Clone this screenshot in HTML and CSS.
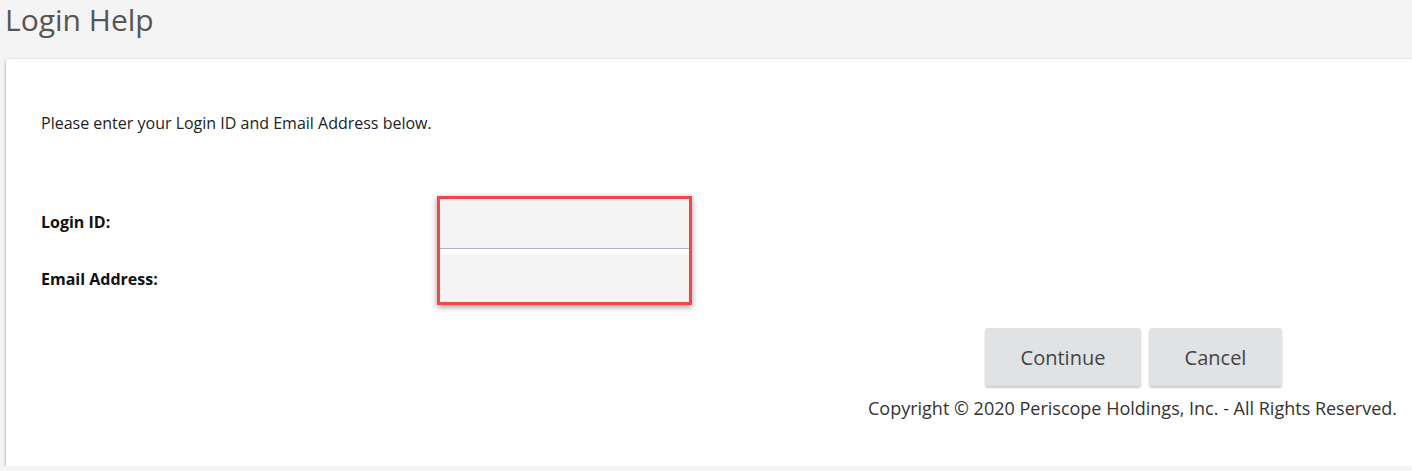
FILE: index.html
```html
<!DOCTYPE html>
<html lang="en">
<head>
<meta charset="utf-8">
<title>Login Help</title>
<link rel="stylesheet" href="styles.css">
</head>
<body>
<header class="page-header">
  <h1 class="page-title">Login Help</h1>
</header>
<main class="card">
  <p class="intro">Please enter your Login ID and Email Address below.</p>
  <form class="login-form">
    <div class="labels">
      <label class="field-label field-label--first" for="loginId">Login ID:</label>
      <label class="field-label field-label--second" for="email">Email Address:</label>
    </div>
    <div class="inputs-box">
      <input class="text-input text-input--first" id="loginId" type="text">
      <input class="text-input text-input--second" id="email" type="text">
    </div>
  </form>
  <div class="actions">
    <button class="btn btn--continue" type="button">Continue</button>
    <button class="btn btn--cancel" type="button">Cancel</button>
  </div>
  <p class="copyright">Copyright © 2020 Periscope Holdings, Inc. - All Rights Reserved.</p>
</main>
</body>
</html>
```

FILE: styles.css
```css
* { box-sizing: border-box; }

html, body {
  margin: 0;
  padding: 0;
  background: #f4f4f4;
  font-family: "Open Sans", "Liberation Sans", sans-serif;
}

.page-header {
  height: 59px;
  padding-left: 5px;
}

.page-title {
  margin: 0;
  font-size: 30px;
  font-weight: 400;
  line-height: 40px;
  color: #555555;
}

.card {
  margin-left: 6px;
  height: 407px;
  background: #ffffff;
  box-shadow: 0 1px 3px rgba(0, 0, 0, 0.35);
  padding: 54px 15px 0 35px;
}

.intro {
  margin: 0;
  font-size: 16px;
  line-height: 20px;
  color: #222222;
}

.login-form {
  display: flex;
  margin-top: 63px;
}

.labels {
  width: 396px;
  display: flex;
  flex-direction: column;
  padding-top: 2px;
  gap: 5px;
}

.field-label {
  display: flex;
  align-items: center;
  font-size: 16px;
  font-weight: 700;
  color: #111111;
}

.field-label--first { height: 48px; }
.field-label--second { height: 48px; margin-top: 4px; }

.inputs-box {
  width: 255px;
  border: 3px solid #f5444a;
  background: #ffffff;
  box-shadow: 0 2px 6px rgba(0, 0, 0, 0.4);
}

.text-input {
  display: block;
  width: 100%;
  border: none;
  background: #f4f4f4;
  font-family: inherit;
  font-size: 14px;
  padding: 0 10px;
  outline: none;
}

.text-input--first {
  height: 50px;
  border-bottom: 1px solid #a9b4c0;
  margin-bottom: 5px;
}

.text-input--second {
  height: 48px;
}

.actions {
  display: flex;
  justify-content: flex-end;
  gap: 8px;
  margin-top: 23px;
  padding-right: 115px;
}

.btn {
  height: 58px;
  border: none;
  border-radius: 3px;
  background: #e1e2e4;
  box-shadow: 0 2px 2px rgba(0, 0, 0, 0.2);
  font-family: inherit;
  font-size: 20px;
  color: #444444;
  cursor: pointer;
}

.btn--continue { width: 156px; }
.btn--cancel { width: 133px; }

.copyright {
  margin: 11px 0 0;
  text-align: right;
  font-size: 18px;
  line-height: 22px;
  color: #333333;
}
```
